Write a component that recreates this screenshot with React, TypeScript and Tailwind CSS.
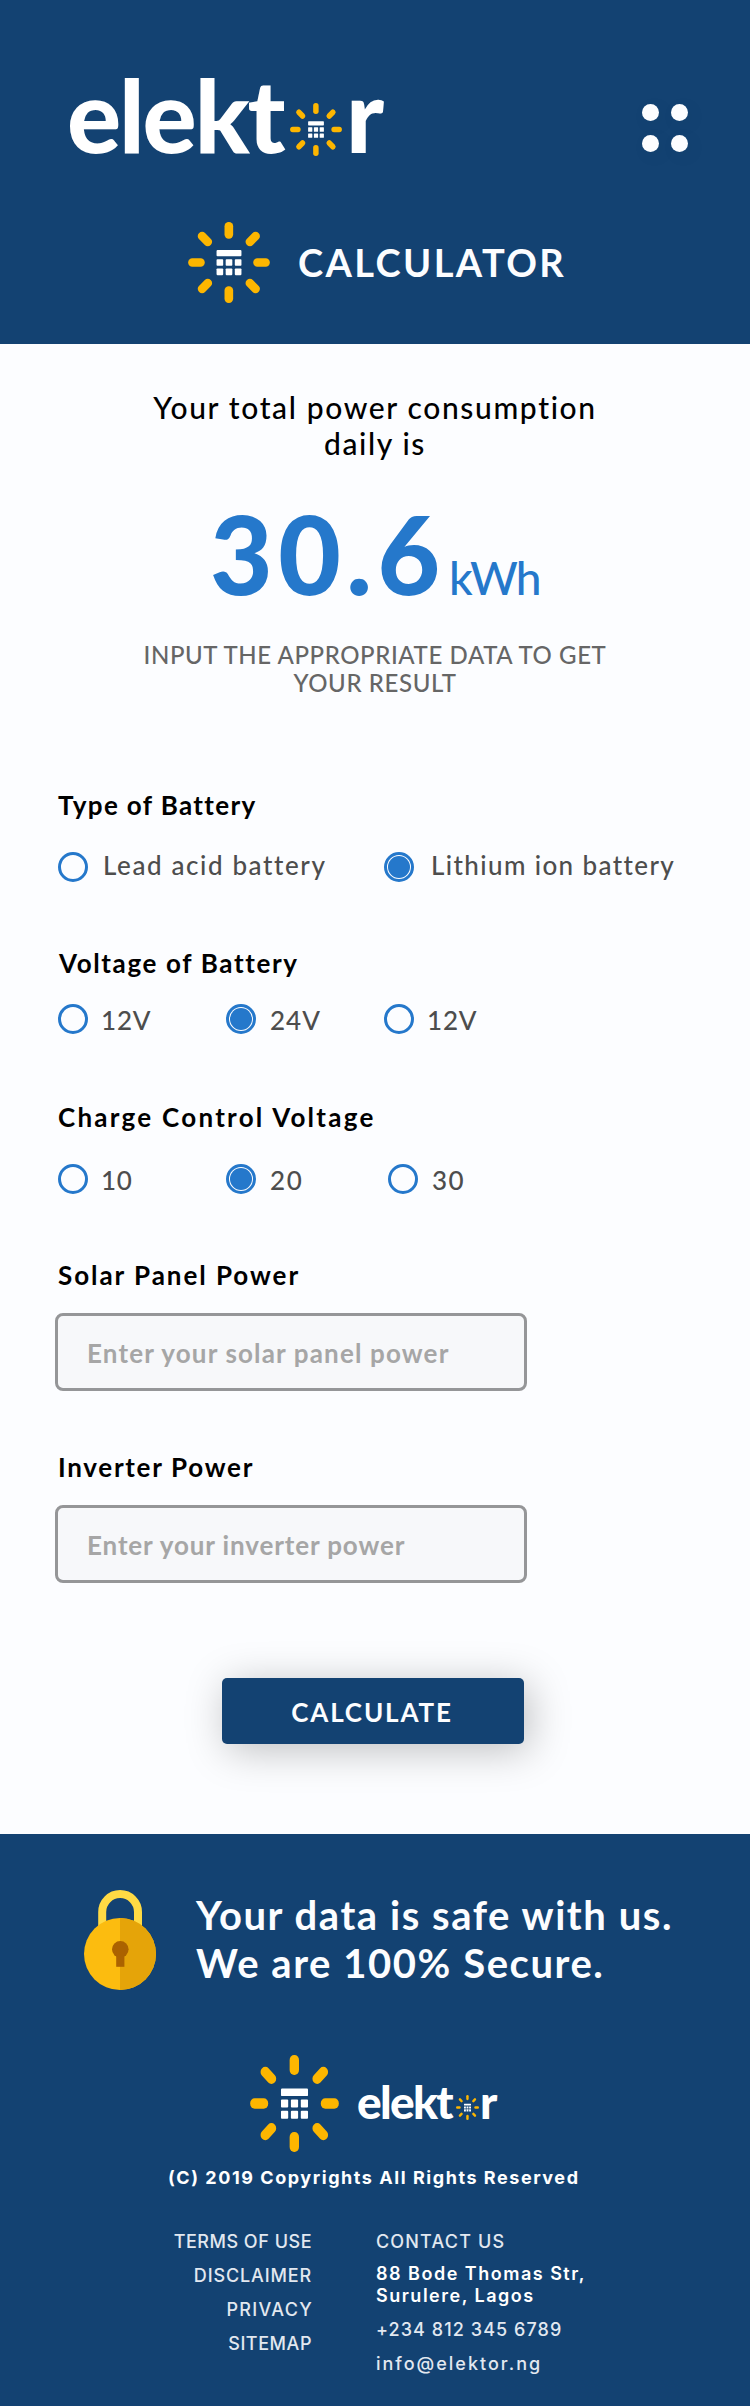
import React from "react";
import clsx from "clsx";

const rays = [
  { x: 123, y: 25, angle: 0 },
  { x: 195, y: 51, angle: 45 },
  { x: 221.5, y: 121.5, angle: 90 },
  { x: 195, y: 192, angle: 135 },
  { x: 123, y: 218, angle: 0 },
  { x: 51, y: 192, angle: 45 },
  { x: 25.5, y: 121.5, angle: 90 },
  { x: 51, y: 51, angle: 135 },
];

function SunCalculator({ className }: { className: string }) {
  return (
    <svg viewBox="0 0 247 243" preserveAspectRatio="none" className={clsx("shrink-0", className)} aria-hidden="true">
      <g fill="#fdb600">
        {rays.map((ray, i) => (
          <rect key={i} x={-13} y={-25} width={26} height={50} rx={12.5} transform={`translate(${ray.x} ${ray.y}) rotate(${ray.angle})`} />
        ))}
      </g>
      <g fill="#ffffff">
        <rect x="86" y="84" width="75" height="19" rx="3" />
        {[111.5, 139.5].map((y) => [86, 113.5, 141].map((x) => <rect key={`${x}-${y}`} x={x} y={y} width="20" height="20" rx="2.5" />))}
      </g>
    </svg>
  );
}

function Radio({ checked }: { checked?: boolean }) {
  return (
    <span className="flex size-[30px] shrink-0 items-center justify-center rounded-full border-[3px] border-[#2578cb]">
      {checked && <span className="size-[22px] rounded-full bg-[#2578cb]" />}
    </span>
  );
}

type OptionProps = { label: string; checked?: boolean; className: string; textClassName: string };

function Option({ label, checked, className, textClassName }: OptionProps) {
  return (
    <label className={clsx("flex h-8 items-start", className)}>
      <Radio checked={checked} />
      <span className={clsx("text-[26px] font-medium whitespace-nowrap text-[#4d4d4d]", textClassName)}>{label}</span>
    </label>
  );
}

function Heading({ children, className }: { children: string; className: string }) {
  return <h2 className={clsx("h-8 text-[26px] leading-[34px] font-bold whitespace-nowrap text-black", className)}>{children}</h2>;
}

function Field({ children, className }: { children: string; className: string }) {
  return (
    <div className="-ml-[3px] flex h-[78px] w-[472px] items-center rounded-[8px] border-[3px] border-[#959698] bg-[#f7f8fa] pt-0.5 pl-[29px]">
      <span className={clsx("text-[26px] font-bold whitespace-nowrap text-[#a6a6a6]", className)}>{children}</span>
    </div>
  );
}

function Lock() {
  return (
    <svg viewBox="0 0 72 100" className="h-[100px] w-[72px] shrink-0" aria-hidden="true">
      <path d="M18.2 40V22a17.9 17.9 0 0 1 35.8 0v18" fill="none" stroke="#ffda44" strokeWidth="8" />
      <circle cx="36" cy="64" r="36" fill="#fcbc0f" />
      <path d="M36 28a36 36 0 0 1 0 72z" fill="#e5a409" />
      <circle cx="36.300" cy="59.300" r="8.300" fill="#ab6200" />
      <rect x="32.200" y="60" width="8.200" height="16.800" fill="#ab6200" />
    </svg>
  );
}

export default function App() {
  return (
    <div className="flex h-[2406px] w-[750px] flex-col overflow-hidden bg-[#fcfdff] font-['Lato',sans-serif]">
      <header className="h-[344px] bg-[#134272] pt-[66px] text-[#fcfdff]">
        <div className="flex h-[98px] items-start pr-[62px] pl-[67px]">
          <div className="flex items-start text-[101px] leading-none font-black text-white">
            <span className="-mt-0.5 w-[223px] tracking-[-2.1px]">elekt</span>
            <SunCalculator className="mt-[37px] h-[53px] w-[52px]" />
            <span className="-mt-0.5 ml-1">r</span>
          </div>
          <div className="mt-[38px] ml-auto grid grid-cols-2 gap-x-3 gap-y-3.5">
            {[0, 1, 2, 3].map((i) => (
              <span key={i} className="size-[17px] rounded-full bg-[#fcfdff] shadow-[4px_4px_20px_rgba(0,0,0,0.05)]" />
            ))}
          </div>
        </div>
        <div className="mt-[58px] ml-[188px] flex items-center">
          <SunCalculator className="h-[81px] w-[82px]" />
          <h1 className="ml-7 pb-0.5 text-[38px] leading-none font-bold tracking-[2.4px]">CALCULATOR</h1>
        </div>
      </header>

      <main className="h-[1490px] px-[58px]">
        <p className="mx-auto mt-[45px] w-[460px] text-center text-[30px] leading-9 font-medium tracking-[1.63px] text-black">
          Your total power consumption daily is
        </p>
        <div className="mt-[38px] ml-[152px] flex items-baseline text-[#2578cb]">
          <span className="w-[239px] text-[108px] leading-none font-black tracking-[5.5px]">30.6</span>
          <span className="text-[46px] leading-none font-medium tracking-[-1.8px]">kWh</span>
        </div>
        <p className="mx-auto mt-[34px] w-[500px] text-center text-[24px] leading-7 font-medium tracking-[0.6px] text-[#666666]">
          INPUT THE APPROPRIATE DATA TO GET YOUR RESULT
        </p>

        <section className="mt-[91px]">
          <Heading className="tracking-[1.35px]">Type of Battery</Heading>
          <div className="mt-8 flex">
            <Option label="Lead acid battery" className="w-[326px]" textClassName="ml-[15px] leading-[26px] tracking-[1.6px]" />
            <Option label="Lithium ion battery" checked className="" textClassName="ml-[17px] leading-[26px] tracking-[1.39px]" />
          </div>
        </section>

        <section className="mt-[62px]">
          <Heading className="ml-px tracking-[1.64px]">Voltage of Battery</Heading>
          <div className="mt-[26px] flex">
            <Option label="12V" className="w-[168px]" textClassName="ml-[13px] leading-8 tracking-[0.8px]" />
            <Option label="24V" checked className="w-[158px]" textClassName="ml-[14px] leading-8 tracking-[1px]" />
            <Option label="12V" className="" textClassName="ml-[13px] leading-8 tracking-[0.8px]" />
          </div>
        </section>

        <section className="mt-16">
          <Heading className="tracking-[2.25px]">Charge Control Voltage</Heading>
          <div className="mt-8 flex">
            <Option label="10" className="w-[168px]" textClassName="ml-[13px] leading-8 tracking-[0.6px]" />
            <Option label="20" checked className="w-[162px]" textClassName="ml-[14px] leading-8 tracking-[1.6px]" />
            <Option label="30" className="" textClassName="ml-[14px] leading-8 tracking-[1.3px]" />
          </div>
        </section>

        <section className="mt-[62px]">
          <Heading className="tracking-[1.95px]">Solar Panel Power</Heading>
          <div className="mt-[23px]">
            <Field className="tracking-[1.15px]">Enter your solar panel power</Field>
          </div>
        </section>

        <section className="mt-[59px]">
          <Heading className="tracking-[1.71px]">Inverter Power</Heading>
          <div className="mt-[23px]">
            <Field className="tracking-[0.88px]">Enter your inverter power</Field>
          </div>
        </section>

        <button className="mt-[95px] ml-[164px] block h-[66px] w-[302px] rounded-[5px] bg-[#134272] pt-0.5 pr-0.5 text-[26px] font-bold tracking-[1.85px] text-[#fcfdff] shadow-[5px_6px_40px_rgba(0,0,0,0.25)]">
          CALCULATE
        </button>
      </main>

      <footer className="h-[572px] bg-[#134272] pt-14 text-white">
        <div className="ml-[84px] flex h-[100px] items-start gap-10">
          <Lock />
          <p className="mt-px text-[40px] leading-[48px] font-bold tracking-[1.56px] whitespace-nowrap text-[#fcfdff]">
            Your data is safe with us.
            <br />
            We are 100% Secure.
          </p>
        </div>

        <div className="mt-[65px] ml-[250px] flex h-[97px] items-start">
          <SunCalculator className="h-[97px] w-[89px]" />
          <div className="mt-6 ml-[18px] flex text-[46px] leading-none font-black">
            <span className="w-[99px] tracking-[-1.7px]">elekt</span>
            <SunCalculator className="mt-4 h-[25px] w-[23px]" />
            <span className="ml-px">r</span>
          </div>
        </div>

        <p className="mt-3.5 ml-[168px] font-['Inter',sans-serif] text-[18px] leading-6 font-bold tracking-[1.55px] whitespace-nowrap">
          (C) 2019 Copyrights All Rights Reserved
        </p>

        <div className="mt-[35px] flex gap-16 font-['Inter',sans-serif] text-[18px] leading-[34px] font-medium whitespace-nowrap text-[#e2e8f0]">
          <ul className="flex w-[312px] flex-col items-end">
            <li className="tracking-[0.52px]">TERMS OF USE</li>
            <li className="tracking-[0.87px]">DISCLAIMER</li>
            <li className="-mr-px tracking-[1.3px]">PRIVACY</li>
            <li className="tracking-[0.56px]">SITEMAP</li>
          </ul>
          <div>
            <p className="tracking-[1.17px]">CONTACT US</p>
            <p className="mt-1 mb-1.5 leading-[22px] font-semibold tracking-[1.5px] text-white">
              88 Bode Thomas Str,
              <br />
              Surulere, Lagos
            </p>
            <p className="tracking-[1.07px]">+234 812 345 6789</p>
            <p className="tracking-[2px]">info@elektor.ng</p>
          </div>
        </div>
      </footer>
    </div>
  );
}
